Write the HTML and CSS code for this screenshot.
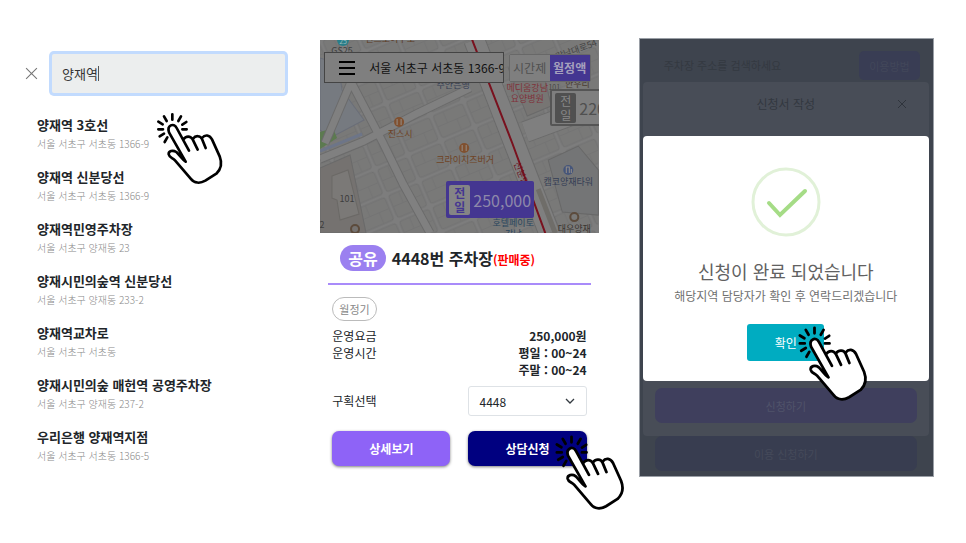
FILE: index.html
```html
<!DOCTYPE html>
<html lang="ko">
<head>
    <meta charset="UTF-8">
    <meta name="viewport" content="width=device-width, initial-scale=1.0">
    <title>주차장 이용 신청</title>
    <link rel="stylesheet" href="styles.css">
</head>
<body>

    <svg class="symbols" aria-hidden="true">
        <symbol id="hand" viewBox="0 0 240 255">
            <path class="hand-fill" d="M107 170 L57 82 C49 62 71 52 80 69 L98 102 C108 91 121 93 128 102 C136 91 149 91 156 99 C167 86 180 91 186 103 L209 152 C218 174 216 190 197 205 L168 227 C151 237 134 234 124 223 L76 166 C67 156 58 157 56 146 C57 133 76 134 85 146 Z"/>
            <path class="hand-line" d="M107 170 C96 163 88 149 79 141 C68 134 55 138 56 148 C58 158 68 158 75 166 L122 221 C133 235 150 236 166 227 L199 206 C214 192 217 175 209 154 L186 103 C178 89 165 88 156 99 M107 170 L57 82 C50 61 71 52 80 69 L117 137 M100 104 C108 91 122 93 128 103 L143 134 M129 101 C137 90 151 92 156 102 L167 129"/>
            <path class="hand-rays" d="M67 44V28M50 48L42 34M38 58L25 50M39 73H25M42 86L29 94M52 97L44 111M85 48L93 34M97 59L109 51M97 73H110"/>
        </symbol>
    </svg>

    <main class="steps">

        <section class="search">
            <div class="search-bar">
                <button class="close-button" aria-label="닫기">
                    <svg viewBox="0 0 12 12"><path d="M1 1L11 11M11 1L1 11"/></svg>
                </button>
                <div class="search-field">
                    <input type="text" class="search-input" aria-label="주소 검색" value="양재역">
                    <span class="caret"></span>
                </div>
            </div>
            <ul class="results">
                <li><strong>양재역 3호선</strong><span>서울 서초구 서초동 1366-9</span></li>
                <li><strong>양재역 신분당선</strong><span>서울 서초구 서초동 1366-9</span></li>
                <li><strong>양재역민영주차장</strong><span>서울 서초구 양재동 23</span></li>
                <li><strong>양재시민의숲역 신분당선</strong><span>서울 서초구 양재동 233-2</span></li>
                <li><strong>양재역교차로</strong><span>서울 서초구 서초동</span></li>
                <li><strong>양재시민의숲 매헌역 공영주차장</strong><span>서울 서초구 양재동 237-2</span></li>
                <li><strong>우리은행 양재역지점</strong><span>서울 서초구 서초동 1366-5</span></li>
            </ul>
            <svg class="hand hand-search" aria-hidden="true"><use href="#hand"/></svg>
        </section>

        <section class="detail">
            <div class="map">
                <svg class="map-canvas" viewBox="0 0 278 193" preserveAspectRatio="xMidYMid slice">
                    <defs>
                        <pattern id="lots" width="36" height="28" patternUnits="userSpaceOnUse" patternTransform="rotate(-23)">
                            <rect width="36" height="28" fill="#7d7d7d"/>
                            <rect x="2" y="2" width="32" height="24" rx="3" fill="#797978" stroke="#717171"/>
                            <path d="M13 2V14M23 14V26M2 14H34" stroke="#747474" fill="none"/>
                        </pattern>
                    </defs>
                    <rect width="278" height="193" fill="url(#lots)"/>
                    <path d="M0 18L18 24L22 50L44 80L10 98L0 90Z" fill="#767a80" stroke="#6a6e78"/>
                    <path d="M0 92L13 88L17 98L0 109Z" fill="#5c7a50"/>
                    <path d="M0 128L30 115L46 193H0Z" fill="#757270" stroke="#6a6a6a"/>
                    <path d="M12 136L28 130L39 174L20 180L17 160L12 158Z" fill="#7b7977" stroke="#6b6966"/>
                    <path d="M188 28L220 20L231 66L207 76Z" fill="#777573" stroke="#6a6a6a"/>
                    <path d="M228 120L258 106L278 130V175L242 172Z" fill="#747576" stroke="#686868"/>
                    <g fill="none" stroke-linejoin="round">
                        <path d="M0 119L44 101L98 73L150 48M22 0L31 42L62 101L83 144L110 193M31 42L5 103" stroke="#6b6b6b" stroke-width="9"/>
                        <path d="M0 119L44 101L98 73L150 48M22 0L31 42L62 101L83 144L110 193M31 42L5 103" stroke="#808080" stroke-width="7"/>
                        <path d="M0 111L42 94" stroke="#6d7588" stroke-width="3"/>
                        <path d="M154 0L194 103L229 193M205 92L278 65" stroke="#6b6b6b" stroke-width="22"/>
                        <path d="M154 0L194 103L229 193M205 92L278 65" stroke="#7f7f7f" stroke-width="20"/>
                        <path d="M218 149L235 193" stroke="#6f6d69" stroke-width="5"/>
                        <path d="M152 0L192 103L225 193" stroke="#79111e" stroke-width="2"/>
                    </g>
                    <g class="poi">
                        <circle class="poi-store" cx="23" cy="0" r="6"/>
                        <circle cx="79" cy="82" r="5"/><path d="M77 79V85M81 79V85"/>
                        <circle cx="144" cy="108" r="5"/><path d="M142 105V111M146 105V111"/>
                        <circle class="poi-blue" cx="248" cy="130" r="5"/><path d="M246 133V127H249V133M251 133V129"/>
                        <circle class="poi-ring" cx="35" cy="189" r="4"/>
                        <circle class="poi-ring" cx="254" cy="177" r="4"/>
                    </g>
                    <g class="map-label" text-anchor="middle">
                        <text class="small" x="23" y="4" fill="#9bb">25</text>
                        <text x="22" y="14" fill="#3f3f3f">GS25</text>
                        <text x="70" y="2" fill="#5c3b25">진스토어주소</text>
                        <text x="133" y="48" fill="#343d54">주안은행</text>
                        <text x="207" y="51" fill="#80323a">메디움강남</text>
                        <text x="207" y="62" fill="#80323a">요양병원</text>
                        <text class="small" x="234" y="50" fill="#444">101</text>
                        <text x="257" y="47" fill="#4a3c32">한우리</text>
                        <text x="80" y="97" fill="#6f4324">진스시</text>
                        <text x="145" y="123" fill="#6f4324">크라이치즈버거</text>
                        <text x="248" y="145" fill="#353e55">캠코양재타워</text>
                        <text x="27" y="162" fill="#3d3d3d">101</text>
                        <text x="2" y="188" fill="#3d3d3d">2</text>
                        <text x="193" y="186" fill="#29465e">호텔페이토</text>
                        <text x="193" y="197" fill="#29465e">강남</text>
                        <text x="254" y="192" fill="#3a3530">대우양재</text>
                        <text x="256" y="13" fill="#444" transform="rotate(-20 256 10)">강남대로54</text>
                        <text x="0" y="0" fill="#69111c" transform="translate(198 135) rotate(68)">신분당</text>
                    </g>
                </svg>
                <div class="map-header">
                    <div class="address">
                        <button class="menu-button" aria-label="메뉴">
                            <svg viewBox="0 0 16 14"><path d="M0 1H16M0 7H16M0 13H16"/></svg>
                        </button>
                        <span>서울 서초구 서초동 1366-9</span>
                    </div>
                    <div class="plan-toggle">
                        <button>시간제</button>
                        <button class="active">월정액</button>
                    </div>
                </div>
                <div class="marker marker-gray"><span>전일</span>220,000</div>
                <div class="marker marker-purple"><span>전일</span>250,000</div>
            </div>

            <div class="sheet">
                <h2 class="sheet-title">
                    <span class="badge">공유</span>
                    <span>4448번 주차장<small>(판매중)</small></span>
                </h2>
                <div class="sheet-body">
                    <span class="chip">월정기</span>
                    <dl class="info">
                        <dt>운영요금</dt>
                        <dd>250,000원</dd>
                        <dt>운영시간</dt>
                        <dd>평일 : 00~24<br>주말 : 00~24</dd>
                    </dl>
                    <div class="pair">
                        <label for="slot">구획선택</label>
                        <select id="slot" class="slot-select">
                            <option>4448</option>
                        </select>
                    </div>
                    <div class="pair">
                        <button class="action view-button">상세보기</button>
                        <button class="action apply-button">상담신청</button>
                    </div>
                </div>
            </div>
            <svg class="hand hand-apply" aria-hidden="true"><use href="#hand"/></svg>
        </section>

        <section class="done">
            <div class="done-header">
                <span>주차장 주소를 검색하세요</span>
                <button class="help-button">이용방법</button>
            </div>
            <div class="form-panel">
                <div class="form-title">
                    <span>신청서 작성</span>
                    <button class="form-close" aria-label="닫기">
                        <svg viewBox="0 0 12 12"><path d="M2 2L10 10M10 2L2 10"/></svg>
                    </button>
                </div>
                <button class="dim-button submit-button">신청하기</button>
            </div>
            <button class="dim-button use-button">이용 신청하기</button>

            <div class="modal" role="dialog" aria-labelledby="doneTitle">
                <svg class="check" viewBox="0 0 70 70">
                    <circle cx="35" cy="35" r="33"/>
                    <path d="M18 36L29 48L54 24"/>
                </svg>
                <h2 id="doneTitle">신청이 완료 되었습니다</h2>
                <p>해당지역 담당자가 확인 후 연락드리겠습니다</p>
                <button class="confirm-button">확인</button>
                <svg class="hand hand-confirm" aria-hidden="true"><use href="#hand"/></svg>
            </div>
        </section>

    </main>

</body>
</html>
```
FILE: styles.css
```css
* {
    box-sizing: border-box;
}

body {
    margin: 0;
    background-color: #fff;
    color: #212529;
    font-family: "Noto Sans CJK KR", sans-serif;
    font-size: 12px;
    line-height: 18px;
}

button,
input,
select {
    font-family: inherit;
    font-size: 12px;
    margin: 0;
}

button {
    border: none;
    padding: 0;
    cursor: pointer;
}

h2,
p,
ul,
dl,
dd {
    margin: 0;
    padding: 0;
}

.symbols {
    display: none;
}

.steps {
    display: grid;
    grid-template-columns: minmax(0, 263fr) minmax(0, 278fr) minmax(0, 295fr);
    column-gap: 36px;
    align-items: start;
    min-height: 100vh;
    padding: 38px 32px 38px 25px;
}

/* pointing hand */

.hand {
    position: absolute;
    width: 84px;
    height: 89px;
    pointer-events: none;
}

.hand-fill {
    fill: #fff;
}

.hand-line,
.hand-rays {
    fill: none;
    stroke: #000;
    stroke-width: 8;
    stroke-linecap: round;
    stroke-linejoin: round;
}

/* search */

.search {
    position: relative;
    padding-top: 16px;
}

.search-bar {
    display: flex;
    align-items: center;
    gap: 14px;
    padding-right: 3px;
}

.close-button {
    width: 13px;
    height: 13px;
    background: none;
}

.close-button svg {
    display: block;
    stroke: #777;
    fill: none;
}

.search-field {
    position: relative;
    flex: 1;
}

.search-input {
    display: block;
    width: 100%;
    height: 39px;
    padding: 0 10px;
    border: none;
    border-radius: 2px;
    background-color: #eceeee;
    box-shadow: 0 0 0 3px #c2dbfe;
    color: #333;
    font-size: 13px;
}

.caret {
    position: absolute;
    left: 46px;
    top: 12px;
    width: 1px;
    height: 15px;
    background-color: #555;
}

.results {
    display: flex;
    flex-direction: column;
    gap: 14px;
    margin: 22px 0 0 12px;
    list-style: none;
}

.results strong,
.results span {
    display: block;
}

.results strong {
    font-size: 13px;
    line-height: 20px;
}

.results span {
    color: #888;
    font-size: 10px;
    font-weight: 300;
}

.hand-search {
    left: 125px;
    top: 67px;
    width: 80px;
    height: 85px;
}

/* parking lot detail */

.detail {
    position: relative;
    padding-top: 2px;
    margin-right: 4px;
    margin-left: -4px;
}

.map {
    position: relative;
    height: 193px;
    overflow: hidden;
    background-color: #7e7e7e;
}

.map-canvas {
    position: absolute;
    width: 100%;
    height: 100%;
}

.map-label {
    font-size: 9px;
}

.map-label .small {
    font-size: 7px;
}

.poi circle {
    fill: #80502f;
}

.poi .poi-store {
    fill: #287e89;
}

.poi .poi-blue {
    fill: #45557a;
}

.poi .poi-ring {
    fill: none;
    stroke: #5c4b3c;
    stroke-width: 2;
}

.poi path {
    fill: none;
    stroke: #948e88;
}

.map-header {
    position: relative;
    display: flex;
    align-items: center;
    gap: 5px;
    padding: 12px 8px 0 4px;
}

.address {
    flex: 1;
    display: flex;
    align-items: center;
    gap: 14px;
    min-width: 0;
    height: 31px;
    padding-left: 14px;
    overflow: hidden;
    border: 1px solid #444;
    background-color: #7f7f7f;
    color: #111;
    white-space: nowrap;
}

.menu-button {
    flex: none;
    width: 16px;
    height: 14px;
    background: none;
}

.menu-button svg {
    display: block;
    stroke: #000;
    stroke-width: 2;
}

.plan-toggle {
    display: flex;
    flex: none;
    height: 28px;
    border: 1px solid #686868;
    border-radius: 2px;
}

.plan-toggle button {
    width: 40px;
    background-color: #7f7f7f;
    color: #505050;
}

.plan-toggle .active {
    background-color: #443691;
    color: #a5a0bd;
    font-weight: bold;
}

.marker {
    position: absolute;
    display: flex;
    align-items: center;
    gap: 3px;
    height: 37px;
    padding: 0 3px;
    border-radius: 2px;
    font-size: 16px;
}

.marker span {
    width: 21px;
    padding: 1px 4px;
    border-radius: 2px;
    font-size: 12px;
    line-height: 14px;
    text-align: center;
}

.marker-gray {
    left: 230px;
    top: 49px;
    border: 2px solid #555;
    background-color: #7f7f7f;
    color: #505050;
}

.marker-gray span {
    background-color: #505050;
    color: #888;
}

.marker-purple {
    left: 126px;
    top: 141px;
    background-color: #443691;
    color: #8d88aa;
}

.marker-purple span {
    background-color: #858585;
    color: #443691;
    font-weight: bold;
}

.sheet {
    padding: 12px 8px 0;
}

.sheet-title {
    display: flex;
    align-items: center;
    gap: 6px;
    padding: 0 12px 12px;
    border-bottom: 2px solid #a98bfa;
    font-size: 16px;
    font-weight: 600;
    line-height: 26px;
    white-space: nowrap;
}

.sheet-title small {
    color: #f00;
    font-size: 12px;
    font-weight: bold;
    line-height: 18px;
}

.badge {
    padding: 0 8px;
    border-radius: 13px;
    background-color: #9b80f0;
    color: #fff;
}

.sheet-body {
    padding: 12px 4px 0;
}

.chip {
    display: inline-block;
    padding: 1px 6px;
    border: 1px solid #bbb;
    border-radius: 12px;
    color: #888;
    font-size: 11px;
    line-height: 20px;
}

.info {
    display: grid;
    grid-template-columns: auto 1fr;
    margin-top: 6px;
    line-height: 17px;
}

.info dd {
    font-weight: bold;
    text-align: right;
}

.pair {
    display: grid;
    grid-template-columns: 1fr 1fr;
    column-gap: 18px;
    align-items: center;
    margin-top: 8px;
}

.pair + .pair {
    margin-top: 15px;
}

.slot-select {
    height: 30px;
    padding: 0 10px;
    appearance: none;
    border: 1px solid #dee2e6;
    border-radius: 3px;
    background: #fff url("data:image/svg+xml,%3Csvg xmlns='http://www.w3.org/2000/svg' width='10' height='6'%3E%3Cpath d='M1 1L5 5L9 1' fill='none' stroke='%23343a40' stroke-width='1.3'/%3E%3C/svg%3E") no-repeat right 11px center;
    color: #212529;
}

.action {
    height: 35px;
    border-radius: 7px;
    box-shadow: 0 1px 3px rgba(0, 0, 0, 0.5);
    color: #fff;
    font-weight: 600;
}

.view-button {
    background-color: #8e63f7;
}

.apply-button {
    background-color: #000080;
}

.hand-apply {
    right: -33px;
    top: 389px;
}

/* application complete */

.done {
    position: relative;
    display: flex;
    flex-direction: column;
    padding: 0 4px 5px 3px;
    border: 1px solid #9a9fa6;
    background-color: #3e444e;
    color: #343941;
}

.done-header {
    display: flex;
    align-items: center;
    justify-content: space-between;
    height: 43px;
    padding: 0 9px 0 21px;
    font-size: 11px;
}

.help-button {
    width: 61px;
    height: 29px;
    margin-top: 10px;
    border-radius: 5px;
    background-color: #393d54;
    color: #42475a;
    font-size: 11px;
}

.done-header span {
    padding-top: 8px;
}

.form-panel {
    display: flex;
    flex-direction: column;
    justify-content: space-between;
    height: 354px;
    padding-bottom: 13px;
    border-radius: 4px;
    background-color: #484d57;
}

.form-title {
    display: grid;
    grid-template-columns: 1fr auto 1fr;
    align-items: center;
    height: 43px;
    color: #333840;
}

.form-title span {
    grid-column: 2;
}

.form-close {
    justify-self: end;
    width: 12px;
    height: 12px;
    margin-right: 21px;
    background: none;
}

.form-close svg {
    display: block;
    stroke: #2f343c;
}

.dim-button {
    height: 35px;
    margin: 0 12px;
    border-radius: 7px;
    color: #50536a;
    font-size: 11px;
}

.submit-button {
    background-color: #3f3f5d;
}

.use-button {
    background-color: #383d50;
    color: #454a5a;
}

.modal {
    position: absolute;
    left: 3px;
    right: 4px;
    top: 97px;
    display: flex;
    flex-direction: column;
    align-items: center;
    padding: 31px 0 20px;
    border-radius: 4px;
    background-color: #fff;
    color: #616161;
}

.modal h2 {
    margin-top: 20px;
    font-size: 18px;
    font-weight: 400;
    line-height: 28px;
    white-space: nowrap;
}

.modal p {
    margin-top: 1px;
    line-height: 20px;
    color: #707070;
    white-space: nowrap;
}

.check {
    width: 70px;
    height: 70px;
    fill: none;
    stroke-linecap: round;
}

.check circle {
    stroke: #e1f1d8;
    stroke-width: 3;
}

.check path {
    stroke: #a5dc86;
    stroke-width: 4;
}

.confirm-button {
    width: 77px;
    height: 37px;
    margin-top: 18px;
    border-radius: 3px;
    background-color: #00acc1;
    color: #fff;
}

.hand-confirm {
    left: calc(50% + 5px);
    top: 182px;
}
```
